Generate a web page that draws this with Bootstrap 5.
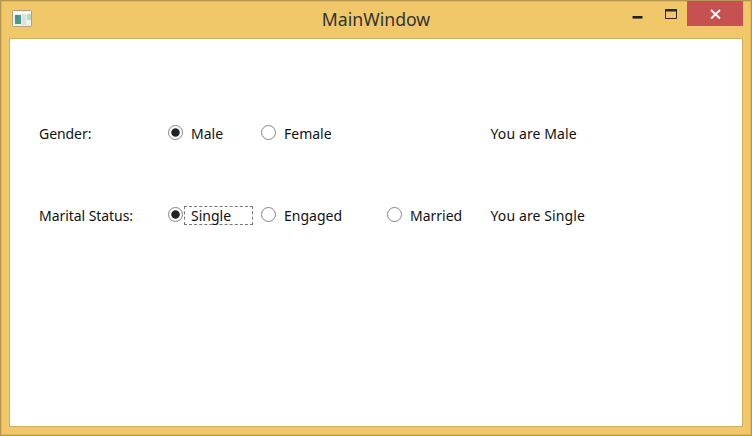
<!DOCTYPE html>
<html lang="en">
<head>
<meta charset="utf-8">
<meta name="viewport" content="width=device-width, initial-scale=1">
<title>MainWindow</title>
<link href="https://cdn.jsdelivr.net/npm/bootstrap@5.3.0/dist/css/bootstrap.min.css" rel="stylesheet">
<style>
body{font-family:"Noto Sans","Open Sans",sans-serif;font-size:14px;color:#111;overflow:hidden}
.window{background:#f0c869;border:1px solid #b5964f;box-shadow:inset 0 0 0 1px #dcb760;padding:0 8px 8px}
.titlebar{height:37px;display:grid;grid-template-columns:130px 1fr 130px}
.app-icon{margin:9px 0 0 3px}
.window-title{font-size:17.7px;line-height:37px;color:#333}
.control{height:25px;border:0;padding:0;background:transparent;display:block}
.control svg,.app-icon{display:block}
.close-btn{width:56px;background:#c75050}
.client{border:1px solid #d2af5d;padding:80px 0 0 29px}
.form-line{display:grid;grid-template-columns:129px 93px 126px 103.5px 1fr;height:28px;align-items:center}
.form-line + .form-line{margin-top:54px}
.line-label,.result{padding-top:2px;white-space:nowrap;line-height:20px}
.line-label{letter-spacing:-.06px}
.result{letter-spacing:.11px}
.option{gap:1px;white-space:nowrap}
.option .form-check-input{width:15px;height:15px;margin:0 0 2px;border:1px solid #858585;background:#fff;flex:none;box-shadow:none}
.option .form-check-input:checked{background:radial-gradient(circle,#222 0 3.8px,#fff 4.6px)}
.option-text{padding:0 6px;border:1px dashed transparent;line-height:17px}
.option-text.focused{border-color:#777;width:69px}
</style>
<script src="https://cdn.jsdelivr.net/npm/bootstrap@5.3.0/dist/js/bootstrap.bundle.min.js"></script>
</head>
<body>
<div class="window vh-100 d-flex flex-column">
  <header class="titlebar">
    <svg class="app-icon" width="21" height="18" viewBox="0 0 21 18">
      <rect x=".5" y=".5" width="19" height="16" rx="1" fill="#eef0f0" stroke="#aaa282"/>
      <path d="M2 2h17v2H2z" fill="#fafcff"/>
      <path d="M3 5h6v9H3z" fill="#4b9b83"/><path d="M3 5h3v4H3z" fill="#4f86a5"/>
      <path d="M10 4h4v11h-4z" fill="#dedfe2"/><path d="M15 4h4v6h-4z" fill="#b9dbc4"/>
    </svg>
    <div class="window-title text-center">MainWindow</div>
    <div class="d-flex justify-content-end">
      <button class="control" aria-label="Minimize"><svg width="28" height="25"><path d="M1.500 15h10v2.600h-10z" fill="#222"/></svg></button>
      <button class="control" aria-label="Maximize"><svg width="28" height="25"><path d="M6.500 9V17.500H17.500V9" fill="none" stroke="#2b2820"/><path d="M6 8h12v2.500H6z" fill="#2b2820"/></svg></button>
      <button class="control close-btn" aria-label="Close"><svg width="56" height="25"><path d="M24 9l9 8.500m0-8.500l-9 8.500" stroke="#fff" stroke-width="1.9"/></svg></button>
    </div>
  </header>
  <main class="client bg-white flex-grow-1">
    <div class="form-line">
      <div class="line-label">Gender:</div>
      <label class="option d-flex align-items-center"><input class="form-check-input" type="radio" name="gender" checked><span class="option-text">Male</span></label>
      <label class="option d-flex align-items-center"><input class="form-check-input" type="radio" name="gender"><span class="option-text">Female</span></label>
      <span></span>
      <div class="result">You are Male</div>
    </div>
    <div class="form-line">
      <div class="line-label">Marital Status:</div>
      <label class="option d-flex align-items-center"><input class="form-check-input" type="radio" name="status" checked><span class="option-text focused">Single</span></label>
      <label class="option d-flex align-items-center"><input class="form-check-input" type="radio" name="status"><span class="option-text">Engaged</span></label>
      <label class="option d-flex align-items-center"><input class="form-check-input" type="radio" name="status"><span class="option-text">Married</span></label>
      <div class="result">You are Single</div>
    </div>
  </main>
</div>
</body>
</html>
